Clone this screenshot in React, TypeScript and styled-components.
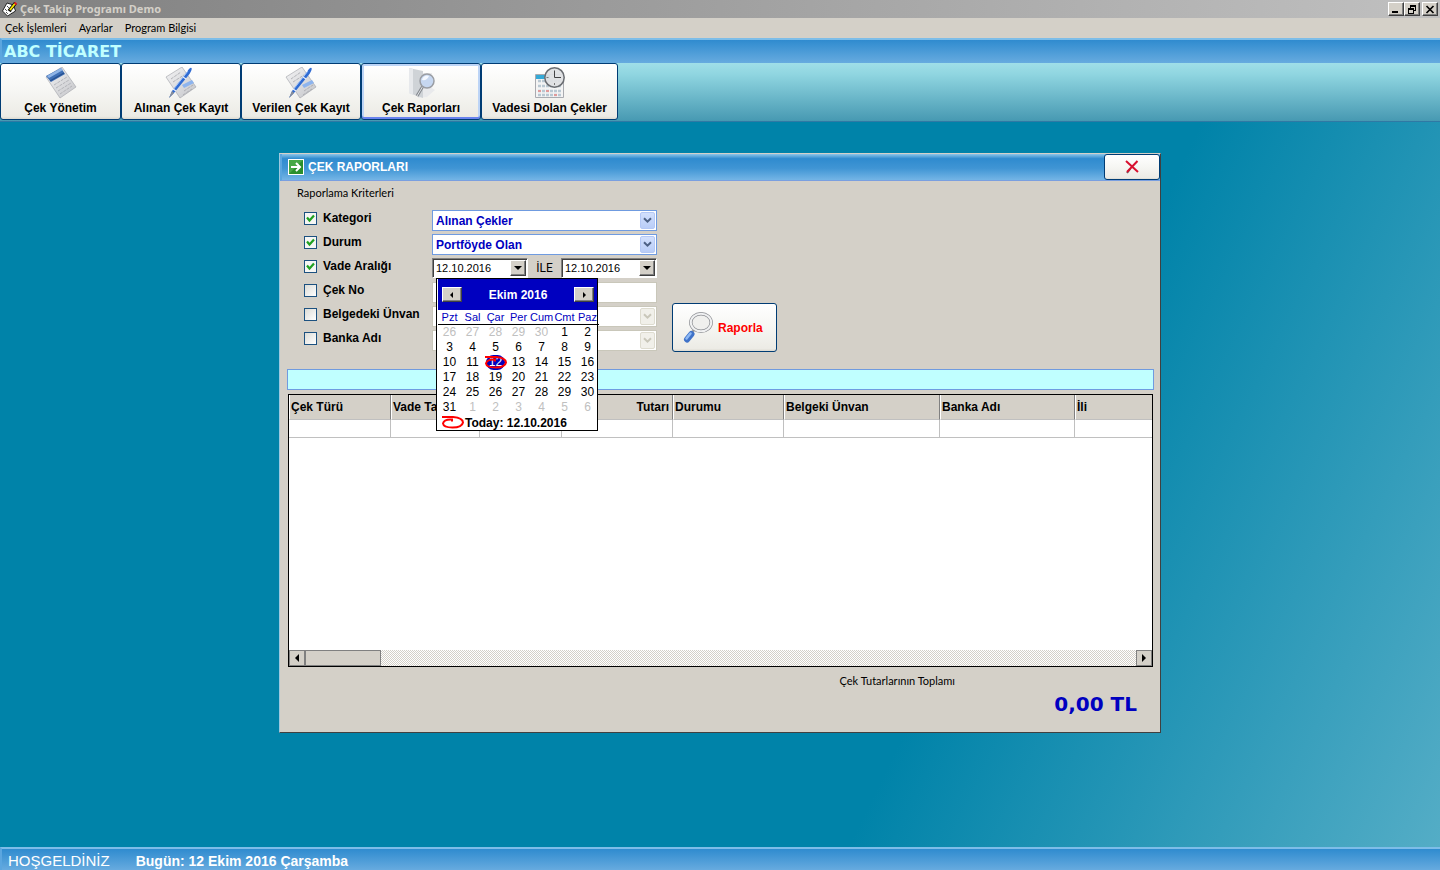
import React from "react";
import styled, { createGlobalStyle, css } from "styled-components";

const sans = `"Liberation Sans", Arial, sans-serif`;
const ui = `"Noto Sans", Tahoma, sans-serif`;
const wide = `"DejaVu Sans", Verdana, sans-serif`;
const light = `Lato, Tahoma, sans-serif`;
const face = "#d4d0c8";

const GlobalStyle = createGlobalStyle`
  *, *::before, *::after { box-sizing: border-box; }
  body { margin: 0; font: 12px/16px ${sans}; color: #000; }
  button, input, select { font: inherit; color: inherit; margin: 0; padding: 0; border-radius: 0; }
  svg { display: block; flex: none; }
`;

const Page = styled.div`
  display: flex;
  flex-direction: column;
  min-height: 100vh;
`;

const TitleBar = styled.header`
  display: flex;
  align-items: center;
  gap: 2px;
  height: 18px;
  padding: 0 2px;
  background: linear-gradient(90deg, #808080, #c0c0c0);
`;

const AppTitle = styled.h1`
  flex: 1;
  margin: 0;
  font: bold 11px/18px ${ui};
  color: ${face};
`;

const WindowControls = styled.div`
  display: flex;
`;

const raised = css`
  border: 1px solid;
  border-color: #fff #404040 #404040 #fff;
  box-shadow: inset -1px -1px #808080;
  background: ${face};
`;

const WindowButton = styled.button<{ $apart?: boolean }>`
  ${raised}
  display: grid;
  place-items: center;
  width: 16px;
  height: 14px;
  margin-left: ${(p) => (p.$apart ? 2 : 0)}px;
`;

const MenuBar = styled.nav`
  display: flex;
  gap: 12px;
  height: 20px;
  padding: 0 5px;
  background: ${face};
`;

const MenuLink = styled.a`
  font: 11px/20px ${light};
  color: #000;
  text-decoration: none;
`;

const blueBar = css`
  background: linear-gradient(#2f8bcf, #67abdf);
  border-top: 2px solid #7dbde8;
  border-left: 2px solid #5ba6df;
`;

const CompanyBar = styled.div`
  ${blueBar}
  height: 25px;
  padding: 0 2px;
  font: bold 16px/24px ${wide};
  color: #c0ffff;
`;

const Toolbar = styled.div`
  display: flex;
  height: 59px;
  padding-bottom: 1px;
  background: linear-gradient(#a0dfe8, #8fd5e0 20%, #4799b2);
  border-bottom: 1px solid #2f79a4;
`;

const xpButton = css`
  border: 1px solid #003c74;
  border-radius: 3px;
  background: linear-gradient(#fff, #f6f6f3 50%, #ecebe5 95%, #dcd9d0);
`;

const ToolButton = styled.button<{ $active?: boolean; $wide?: boolean }>`
  ${xpButton}
  display: flex;
  flex-direction: column;
  align-items: center;
  width: ${(p) => (p.$wide ? 137 : 120)}px;
  height: 57px;
  padding-top: 3px;
  font-weight: bold;
  line-height: 18px;
  white-space: nowrap;
  ${(p) =>
    p.$active &&
    css`
      box-shadow: inset 0 -2px #6982ee, inset 0 0 0 2px #bcd4f6;
    `}
  &:first-child { width: 121px; }
  & + & { margin-left: 0; }
`;

const Desktop = styled.main`
  flex: 1;
  padding: 31px 24px;
  background: linear-gradient(116deg, #0083a9 67%, #54adc6);
`;

const Dialog = styled.section`
  position: relative;
  max-width: 882px;
  margin: 0 auto;
  background: ${face};
  border: 1px solid;
  border-color: #d4d0c8 #404040 #404040 #9cc8e0;
`;

const DialogBar = styled.div`
  display: flex;
  align-items: center;
  height: 27px;
  padding-left: 6px;
  gap: 4px;
  border-left: 2px solid #5ba6df;
  border-bottom: 1px solid #7a9fe0;
  background: linear-gradient(#8cc6ea, #2f8bcf 18%, #4095d4 55%, #74b5e6);
`;

const DialogTitle = styled.h2`
  flex: 1;
  margin: 0;
  font: bold 12px/16px ${sans};
  color: #fff;
`;

const CloseButton = styled.button`
  ${xpButton}
  display: grid;
  place-items: center;
  width: 56px;
  height: 26px;
`;

const Criteria = styled.form`
  padding: 4px 17px 16px;
`;

const CriteriaTitle = styled.p`
  margin: 0 0 8px;
  font: 11px/16px ${light};
`;

const CriteriaBody = styled.div`
  display: flex;
  align-items: flex-end;
  gap: 15px;
  padding-left: 7px;
`;

const Rows = styled.div`
  width: 353px;
`;

const Row = styled.div`
  display: flex;
  height: 24px;
  padding-top: 1px;
`;

const CheckLabel = styled.label`
  display: flex;
  align-items: center;
  gap: 6px;
  width: 128px;
  height: 16px;
  font-weight: bold;
  white-space: nowrap;
`;

const CheckBox = styled.input`
  appearance: none;
  flex: none;
  width: 13px;
  height: 13px;
  border: 1px solid #1c5180;
  background: linear-gradient(135deg, #dcdcd7, #fff);
  &:checked {
    background: #f6f6f4
      url("data:image/svg+xml,%3Csvg xmlns='http://www.w3.org/2000/svg' viewBox='0 0 11 11'%3E%3Cpath d='M2 4.500 4.500 7.500 9 2.500' fill='none' stroke='%2321a121' stroke-width='2.200'/%3E%3C/svg%3E");
  }
`;

const SelectBox = styled.div`
  position: relative;
  flex: 1;
  height: 21px;
`;

const Select = styled.select`
  appearance: none;
  width: 100%;
  height: 21px;
  padding: 0 20px 0 3px;
  border: 1px solid #6f9be0;
  background: #fff;
  font-weight: bold;
  color: #0000c0;
  opacity: 1;
  &:disabled { border-color: #c9c7ba; }
`;

const SelectArrow = styled.span<{ $off?: boolean }>`
  position: absolute;
  top: 2px;
  right: 2px;
  display: grid;
  place-items: center;
  width: 15px;
  height: 17px;
  border-radius: 2px;
  border: 1px solid ${(p) => (p.$off ? "#dedcd0" : "#b4c8f6")};
  background: ${(p) => (p.$off ? "#f1f0ea" : "linear-gradient(#d2e0fd, #b9cdf8)")};
  color: ${(p) => (p.$off ? "#c9c7ba" : "#4d6185")};
  pointer-events: none;
`;

const TextBox = styled.input`
  flex: 1;
  height: 21px;
  border: 1px solid #c9c7ba;
  background: #fff;
`;

const DateRange = styled.div`
  position: relative;
  display: flex;
  justify-content: space-between;
  flex: 1;
`;

const DateBox = styled.div`
  display: flex;
  width: 96px;
  height: 20px;
  padding: 1px;
  border: 1px solid;
  border-color: #808080 #fff #fff #808080;
  box-shadow: inset 1px 1px #404040;
  background: #fff;
`;

const DateInput = styled.input`
  flex: 1;
  min-width: 0;
  border: 0;
  padding-left: 2px;
  background: none;
  font-size: 11px;
  outline: 0;
`;

const DropButton = styled.button`
  ${raised}
  display: grid;
  place-items: center;
  width: 16px;
`;

const RangeWord = styled.span`
  font: 12px/20px Roboto, sans-serif;
`;

const Calendar = styled.div`
  position: absolute;
  z-index: 1;
  top: 20px;
  left: 4px;
  width: 162px;
  border: 1px solid #000;
  padding-left: 1px;
  background: #fff;
`;

const MonthBar = styled.div`
  display: flex;
  align-items: center;
  justify-content: space-between;
  height: 31px;
  padding: 0 3px 0 4px;
  background: #0000c0;
  font-weight: bold;
  color: #fff;
`;

const MonthButton = styled.button`
  ${raised}
  display: grid;
  place-items: center;
  width: 20px;
  height: 15px;
`;

const Month = styled.table`
  width: 161px;
  table-layout: fixed;
  border-spacing: 0;
  text-align: center;
`;

const WeekDay = styled.th`
  height: 15px;
  padding: 0;
  border-bottom: 1px solid #000;
  font: 11px/14px ${sans};
  color: #0000c0;
`;

const Day = styled.td<{ $muted?: boolean; $today?: boolean }>`
  position: relative;
  height: 15px;
  padding: 0;
  font: 12px/15px ${sans};
  color: ${(p) => (p.$muted ? "#c0c0c0" : p.$today ? "#fff" : "#000")};
`;

const TodayText = styled.span`
  display: block;
  margin: 0 2px;
  border-radius: 8px;
  background: #0000c0;
`;

const TodayRing = styled.span`
  position: absolute;
  top: 0;
  left: 0;
`;

const TodayLine = styled.div`
  display: flex;
  align-items: center;
  gap: 1px;
  height: 15px;
  padding-left: 3px;
  font-weight: bold;
`;

const ReportButton = styled.button`
  ${xpButton}
  display: flex;
  align-items: center;
  gap: 4px;
  width: 105px;
  height: 49px;
  margin-bottom: 1px;
  padding-left: 9px;
  font-weight: bold;
  color: #f00;
`;

const InfoStrip = styled.div`
  height: 21px;
  margin: 0 6px 4px 7px;
  border: 1px solid #6f9be0;
  background: #c0ffff;
`;

const Grid = styled.div`
  display: flex;
  flex-direction: column;
  height: 273px;
  margin: 0 7px 0 8px;
  border: 1px solid #000;
  background: #fff;
`;

const GridBody = styled.div`
  flex: 1;
  overflow: hidden;
`;

const Table = styled.table`
  width: 100%;
  table-layout: fixed;
  border-collapse: separate;
  border-spacing: 0;
`;

const Head = styled.th<{ $width?: number; $right?: boolean }>`
  width: ${(p) => (p.$width ? `${p.$width}px` : "auto")};
  height: 25px;
  padding: 0 3px 0 1px;
  overflow: hidden;
  border-left: 1px solid #fff;
  border-right: 1px solid #808080;
  border-bottom: 1px solid #c0c0c0;
  background: ${face};
  text-align: ${(p) => (p.$right ? "right" : "left")};
  white-space: nowrap;
  &:last-child { border-right: 0; }
`;

const Cell = styled.td`
  height: 18px;
  padding: 0;
  border-right: 1px solid #c0c0c0;
  border-bottom: 1px solid #c0c0c0;
  &:last-child { border-right: 0; }
`;

const ScrollBar = styled.div`
  display: flex;
  height: 16px;
  background: repeating-conic-gradient(${face} 0 25%, #fff 0 50%) 0 0 / 2px 2px;
`;

const ScrollButton = styled.button`
  display: grid;
  place-items: center;
  width: 16px;
  border: 1px solid #808080;
  background: ${face};
`;

const ScrollThumb = styled.div`
  width: 76px;
  margin-right: auto;
  border: 1px solid #808080;
  background: ${face};
`;

const Totals = styled.div`
  padding: 6px 23px 16px;
  text-align: right;
`;

const TotalLabel = styled.p`
  margin: 0 182px 3px 0;
  font: 11px/16px ${light};
`;

const TotalValue = styled.p`
  margin: 0;
  font: bold 20px/24px ${wide};
  color: #0000c0;
`;

const StatusBar = styled.footer`
  ${blueBar}
  display: flex;
  align-items: center;
  gap: 26px;
  height: 23px;
  padding: 2px 6px 0;
  color: #fff;
`;

const Welcome = styled.span`
  font-size: 15px;
`;

const Today = styled.span`
  font-size: 14px;
  font-weight: bold;
`;

const Triangle = ({ dir }: { dir: "left" | "right" | "down" }) => {
  const d = { left: "M6 0v8L2 4z", right: "M2 0v8l4-4z", down: "M0 2h8L4 6z" }[dir];
  return (
    <svg width="8" height="8" viewBox="0 0 8 8" aria-hidden="true">
      <path d={d} />
    </svg>
  );
};

const SmallTriangle = ({ dir }: { dir: "left" | "right" }) => (
  <svg width="6" height="6" viewBox="0 0 6 6" aria-hidden="true">
    <path d={dir === "left" ? "M4 0v6L1 3z" : "M2 0v6l3-3z"} />
  </svg>
);

const Chevron = () => (
  <svg width="9" height="7" viewBox="0 0 9 7" aria-hidden="true">
    <path d="M1 1.200 4.500 4.700 8 1.200" fill="none" stroke="currentColor" strokeWidth="2" />
  </svg>
);

const AppIcon = () => (
  <svg width="16" height="16" viewBox="0 0 16 16" aria-hidden="true">
    <path d="M5 2 .500 10l5 5 8-5-2-6z" fill="#fff" stroke="#000" strokeWidth=".8" />
    <path d="M3 8l2 2M5 5l2 2M4 11l2 2M8 10l2 1" stroke="#000" strokeDasharray="1 1" />
    <path d="M7 10 13.500 2" stroke="#000" strokeWidth="3.500" />
    <path d="M8 9 13 2.500" stroke="#f4e400" strokeWidth="2" />
    <path d="M12.500 1.500l2 2" stroke="#e02020" strokeWidth="2" />
  </svg>
);

const Sheet = ({ id }: { id: string }) => (
  <>
    <defs>
      <linearGradient id={id} x1="0" y1="0" x2="1" y2="1">
        <stop offset="0" stopColor="#f4f4f5" />
        <stop offset="1" stopColor="#c4c5c9" />
      </linearGradient>
    </defs>
    <path d="M1 10 17 0l14 20-16 11z" fill={`url(#${id})`} stroke="#a9abb0" strokeWidth=".7" />
  </>
);

const NotepadIcon = () => (
  <svg width="32" height="32" viewBox="0 0 32 32" aria-hidden="true">
    <Sheet id="pad" />
    <path d="M1 9 16 1l4 6-14 8z" fill="#3e6fb5" />
    <path d="M2 9 16 1l2 2L4 11z" fill="#8fb4e6" />
    <path d="M5 14 19 6" stroke="#27508f" strokeWidth="1.200" />
    <path d="m9 18 13-8M11 21l13-8M13 24l13-8M15 27l12-8" stroke="#a9abb0" strokeWidth=".8" strokeDasharray="3 1" />
  </svg>
);

const PenIcon = ({ id }: { id: string }) => (
  <svg width="32" height="32" viewBox="0 0 32 32" aria-hidden="true">
    <Sheet id={id} />
    <path d="m6 12 10-7M8 15 19 8M19 24l9-6M18 28l9-6" stroke="#a4a6ab" strokeWidth=".8" strokeDasharray="3 1" />
    <path d="m17 18 10-5 2 3-10 5z" fill="#8db4ee" />
    <path d="M4 31 7 24 22 5q3-5 4.500-4 1 1-2 6L9 26z" fill="#2f6bd2" />
    <path d="M4 31 7 24l2 2z" fill="#8b8e96" />
    <path d="M8 23 23 4" stroke="#9cc0fa" strokeWidth="1" />
    <path d="m8 22 3 2M18 10l3 2" stroke="#e8eefa" strokeWidth="1.200" />
  </svg>
);

const ReportsIcon = () => (
  <svg width="32" height="32" viewBox="0 0 32 32" aria-hidden="true">
    <path d="M14 6h13v15l3 2-8 7-9 1z" fill="#e9eaec" />
    <path d="M4 1l14 3v27L4 26z" fill="#cfd3d7" />
    <path d="M4 1l4 1v26l-4-2z" fill="#e7e9ec" />
    <path d="m18 19-6 10" stroke="#85898f" strokeWidth="3" />
    <path d="m18 19-6 10" stroke="#dfe2e6" strokeWidth="1" />
    <circle cx="22" cy="14" r="7" fill="#c6d7f0" stroke="#9a9da3" strokeWidth="1.500" />
    <path d="M17 13a5 5 0 0 1 7-4q-2 5-7 4" fill="#f4f8ff" />
  </svg>
);

const DueIcon = () => (
  <svg width="32" height="32" viewBox="0 0 32 32" aria-hidden="true">
    <path d="M1.500 7.500h28v23h-28z" fill="#f4f4f4" stroke="#a9abb0" />
    <path d="M2 8h14v4H2z" fill="#35a9d6" />
    <path d="M4 14h24M4 19h24M4 24h24M4 28h24" stroke="#b9c8d2" strokeWidth="2.500" strokeDasharray="3 1" />
    <path d="M4 24h3M12 24h3M20 28h3" stroke="#e09a9a" strokeWidth="2" />
    <circle cx="20.500" cy="10.500" r="9.700" fill="#dfe0e2" fillOpacity=".94" stroke="#6a6d72" strokeWidth="1.500" />
    <path d="M20.500 3.500v7H27" fill="none" stroke="#444" strokeWidth="1" />
    <path d="M12.500 10.500h2M20.500 16v2" stroke="#777" />
  </svg>
);

const GoIcon = () => (
  <svg width="16" height="16" viewBox="0 0 16 16" aria-hidden="true">
    <path d="M0 0h16v16H0z" fill="#fff" />
    <path d="M1 1h14v14H1z" fill="#2a8f2c" />
    <path d="M1 1h14L1 15z" fill="#46a845" />
    <path d="M3 8h8M8 4l4 4-4 4" fill="none" stroke="#fff" strokeWidth="2" />
  </svg>
);

const CloseIcon = () => (
  <svg width="14" height="14" viewBox="0 0 14 14" aria-hidden="true">
    <path d="m2 13 3-4" stroke="#666" strokeWidth="2" />
    <path d="m1 1 12 11M12.500 1 2 12" fill="none" stroke="#d8102f" strokeWidth="2" />
  </svg>
);

const LensIcon = () => (
  <svg width="32" height="32" viewBox="0 0 32 32" aria-hidden="true">
    <path d="m12 18-3 4" stroke="#999" strokeWidth="2.500" />
    <path d="M9.500 22 5 27.500" stroke="#3f72c8" strokeWidth="6" strokeLinecap="round" />
    <path d="M8.500 21.500 4.500 26.500" stroke="#8db9f5" strokeWidth="2.500" strokeLinecap="round" />
    <ellipse cx="19" cy="10.500" rx="10.200" ry="8.800" fill="#f0f0ee" stroke="#8c8e93" strokeWidth="3.400" />
    <ellipse cx="19" cy="10.500" rx="10.200" ry="8.800" fill="none" stroke="#f0f1f2" strokeWidth="2" />
  </svg>
);

const RingIcon = () => (
  <svg width="23" height="15" viewBox="0 0 23 15" aria-hidden="true">
    <path
      d="M1 2h11q10 1 10 5.500-1 5-10.500 5-9 0-9.500-4Q3 4 11 4.500v2"
      fill="none"
      stroke="#f00"
      strokeWidth="2"
    />
  </svg>
);

const tools = [
  { label: "Çek Yönetim", icon: <NotepadIcon /> },
  { label: "Alınan Çek Kayıt", icon: <PenIcon id="received" /> },
  { label: "Verilen Çek Kayıt", icon: <PenIcon id="given" /> },
  { label: "Çek Raporları", icon: <ReportsIcon />, active: true },
  { label: "Vadesi Dolan Çekler", icon: <DueIcon />, wide: true },
];

const weekDays = ["Pzt", "Sal", "Çar", "Per", "Cum", "Cmt", "Paz"];

// Six weeks starting on Monday 26 September.
const weeks = Array.from({ length: 6 }, (_, w) =>
  Array.from({ length: 7 }, (_, d) => {
    const n = w * 7 + d - 4;
    if (n < 1) return { day: n + 30, muted: true };
    if (n > 31) return { day: n - 31, muted: true };
    return { day: n, muted: false };
  })
);

const columns = [
  { label: "Çek Türü", width: 102 },
  { label: "Vade Ta", width: 89 },
  { label: "", width: 82 },
  { label: "Tutarı", width: 111, right: true },
  { label: "Durumu", width: 111 },
  { label: "Belgeki Ünvan", width: 156 },
  { label: "Banka Adı", width: 135 },
  { label: "İli" },
];

function Check({ label, checked }: { label: string; checked?: boolean }) {
  return (
    <CheckLabel>
      <CheckBox type="checkbox" defaultChecked={checked} />
      {label}
    </CheckLabel>
  );
}

function Picker({ label, value, off }: { label: string; value?: string; off?: boolean }) {
  return (
    <SelectBox>
      <Select aria-label={label} disabled={off}>
        <option>{value}</option>
      </Select>
      <SelectArrow $off={off}>
        <Chevron />
      </SelectArrow>
    </SelectBox>
  );
}

function DateField({ label }: { label: string }) {
  return (
    <DateBox>
      <DateInput aria-label={label} defaultValue="12.10.2016" />
      <DropButton type="button" aria-label={label}>
        <Triangle dir="down" />
      </DropButton>
    </DateBox>
  );
}

function MonthCalendar() {
  return (
    <Calendar>
      <MonthBar>
        <MonthButton type="button" aria-label="Eylül">
          <SmallTriangle dir="left" />
        </MonthButton>
        Ekim 2016
        <MonthButton type="button" aria-label="Kasım">
          <SmallTriangle dir="right" />
        </MonthButton>
      </MonthBar>
      <Month>
        <thead>
          <tr>
            {weekDays.map((d) => (
              <WeekDay key={d}>{d}</WeekDay>
            ))}
          </tr>
        </thead>
        <tbody>
          {weeks.map((week, i) => (
            <tr key={i}>
              {week.map(({ day, muted }) =>
                day === 12 ? (
                  <Day key={day} $today>
                    <TodayText>{day}</TodayText>
                    <TodayRing>
                      <RingIcon />
                    </TodayRing>
                  </Day>
                ) : (
                  <Day key={day} $muted={muted}>
                    {day}
                  </Day>
                )
              )}
            </tr>
          ))}
        </tbody>
      </Month>
      <TodayLine>
        <RingIcon />
        Today: 12.10.2016
      </TodayLine>
    </Calendar>
  );
}

export default function App() {
  return (
    <Page>
      <GlobalStyle />
      <TitleBar>
        <AppIcon />
        <AppTitle>Çek Takip Programı Demo</AppTitle>
        <WindowControls>
          <WindowButton aria-label="Simge durumuna küçült">
            <svg width="10" height="9" viewBox="0 0 10 9">
              <path d="M1 6h6v2H1z" />
            </svg>
          </WindowButton>
          <WindowButton aria-label="Önceki boyut">
            <svg width="10" height="9" viewBox="0 0 10 9" shapeRendering="crispEdges">
              <path d="M3 0h6v6H7V5h1V2H4v1H3zM1 3h6v6H1zM2 5v3h4V5z" fillRule="evenodd" />
            </svg>
          </WindowButton>
          <WindowButton $apart aria-label="Kapat">
            <svg width="10" height="9" viewBox="0 0 10 9">
              <path d="m1.500 1 7 7M8.500 1l-7 7" stroke="#000" strokeWidth="1.700" />
            </svg>
          </WindowButton>
        </WindowControls>
      </TitleBar>
      <MenuBar>
        <MenuLink href="#islemler">Çek İşlemleri</MenuLink>
        <MenuLink href="#ayarlar">Ayarlar</MenuLink>
        <MenuLink href="#bilgi">Program Bilgisi</MenuLink>
      </MenuBar>
      <CompanyBar>ABC TİCARET</CompanyBar>
      <Toolbar>
        {tools.map((t) => (
          <ToolButton key={t.label} $active={t.active} $wide={t.wide}>
            {t.icon}
            {t.label}
          </ToolButton>
        ))}
      </Toolbar>
      <Desktop>
        <Dialog aria-label="Çek Raporları">
          <DialogBar>
            <GoIcon />
            <DialogTitle>ÇEK RAPORLARI</DialogTitle>
            <CloseButton aria-label="Kapat">
              <CloseIcon />
            </CloseButton>
          </DialogBar>
          <Criteria>
            <CriteriaTitle>Raporlama Kriterleri</CriteriaTitle>
            <CriteriaBody>
              <Rows>
                <Row>
                  <Check label="Kategori" checked />
                  <Picker label="Kategori" value="Alınan Çekler" />
                </Row>
                <Row>
                  <Check label="Durum" checked />
                  <Picker label="Durum" value="Portföyde Olan" />
                </Row>
                <Row>
                  <Check label="Vade Aralığı" checked />
                  <DateRange>
                    <DateField label="Başlangıç" />
                    <RangeWord>İLE</RangeWord>
                    <DateField label="Bitiş" />
                    <MonthCalendar />
                  </DateRange>
                </Row>
                <Row>
                  <Check label="Çek No" />
                  <TextBox aria-label="Çek No" disabled />
                </Row>
                <Row>
                  <Check label="Belgedeki Ünvan" />
                  <Picker label="Belgedeki Ünvan" off />
                </Row>
                <Row>
                  <Check label="Banka Adı" />
                  <Picker label="Banka Adı" off />
                </Row>
              </Rows>
              <ReportButton type="button">
                <LensIcon />
                Raporla
              </ReportButton>
            </CriteriaBody>
          </Criteria>
          <InfoStrip />
          <Grid>
            <GridBody>
              <Table>
                <thead>
                  <tr>
                    {columns.map((c, i) => (
                      <Head key={i} $width={c.width} $right={c.right}>
                        {c.label}
                      </Head>
                    ))}
                  </tr>
                </thead>
                <tbody>
                  <tr>
                    {columns.map((_, i) => (
                      <Cell key={i} />
                    ))}
                  </tr>
                </tbody>
              </Table>
            </GridBody>
            <ScrollBar>
              <ScrollButton aria-label="Sola kaydır">
                <Triangle dir="left" />
              </ScrollButton>
              <ScrollThumb />
              <ScrollButton aria-label="Sağa kaydır">
                <Triangle dir="right" />
              </ScrollButton>
            </ScrollBar>
          </Grid>
          <Totals>
            <TotalLabel>Çek Tutarlarının Toplamı</TotalLabel>
            <TotalValue>0,00 TL</TotalValue>
          </Totals>
        </Dialog>
      </Desktop>
      <StatusBar>
        <Welcome>HOŞGELDİNİZ</Welcome>
        <Today>Bugün: 12 Ekim 2016 Çarşamba</Today>
      </StatusBar>
    </Page>
  );
}
